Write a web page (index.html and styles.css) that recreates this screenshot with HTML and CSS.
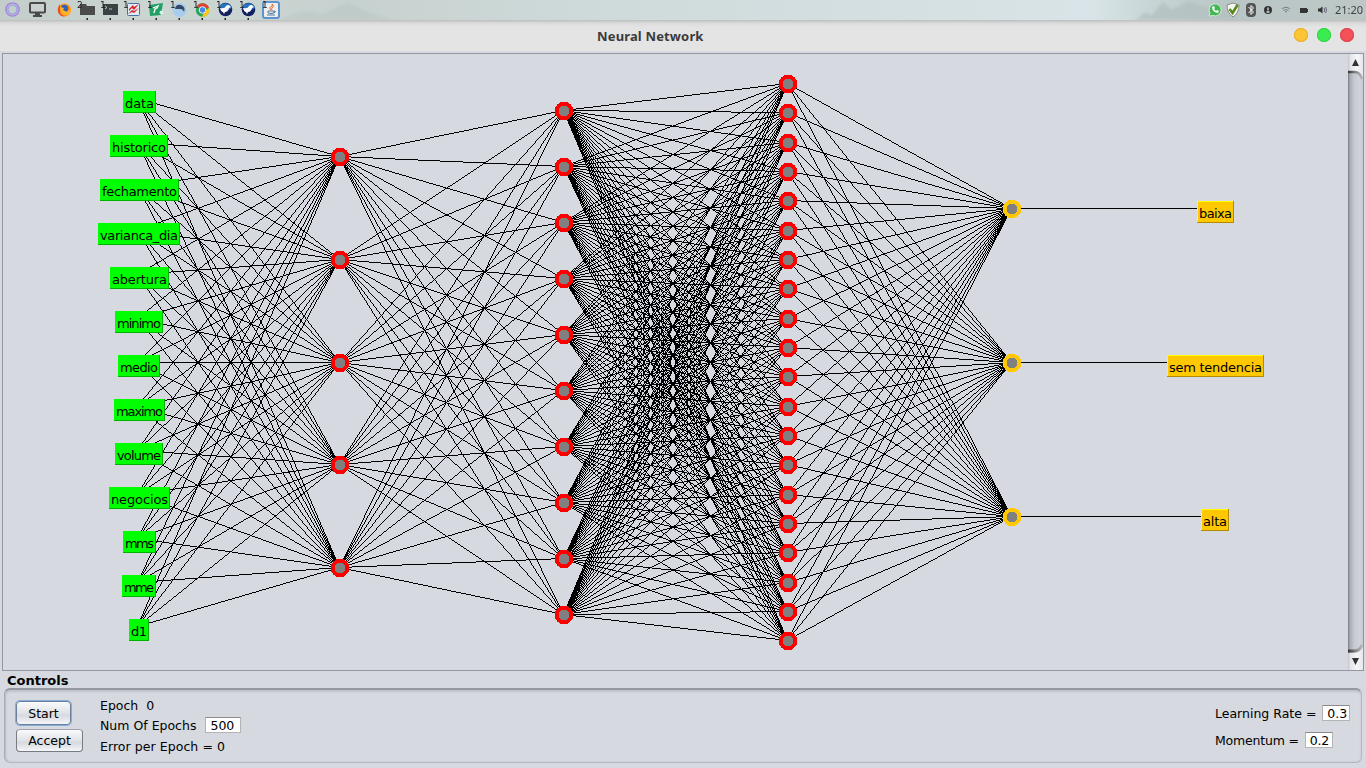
FILE: index.html
```html
<!DOCTYPE html>
<html lang="en">
<head>
<meta charset="utf-8">
<title>Neural Network</title>
<link rel="stylesheet" href="styles.css">
</head>
<body>
<header class="panel">
  <svg class="scenery" width="1366" height="20" viewBox="0 0 1366 20">
    <defs>
      <linearGradient id="sky" x1="0" x2="1"><stop offset="0" stop-color="#c3cdc9"/><stop offset=".12" stop-color="#cbd5d2"/><stop offset=".27" stop-color="#c7d2d0"/><stop offset=".45" stop-color="#cfdadb"/><stop offset=".8" stop-color="#d8e4e7"/><stop offset=".84" stop-color="#c9d6d7"/><stop offset=".9" stop-color="#b9c6c6"/><stop offset="1" stop-color="#bdc8c6"/></linearGradient>
      <filter id="soft"><feGaussianBlur stdDeviation="1.5"/></filter>
    </defs>
    <rect width="1366" height="20" fill="url(#sky)"/>
    <g filter="url(#soft)" fill="#b3c1bf"><path d="M280 20l25-9 17 3 27-12 18 10 24 8z" opacity=".4"/><path d="M1136 20l10-8 5 4 12-14 9 8 16-9 20 7 9-5 20 16z" opacity=".8"/></g>
  </svg>
  <div class="apps">
    <svg width="285" height="20" viewBox="0 0 285 20">
      <g fill="none" stroke-width="1.400"><circle cx="12.500" cy="9.500" r="6.600" stroke="#a880e0"/><circle cx="12.500" cy="9.500" r="4.600" stroke="#8fa0ea"/></g>
      <rect x="30" y="3" width="15" height="9.500" rx="1" fill="#cbd0d0" stroke="#4a4a4a" stroke-width="2"/><path d="M35 13h5v2h2v2h-9v-2h2z" fill="#4a4a4a"/>
      <circle cx="64.500" cy="10" r="6.500" fill="#ff9412"/><path d="M60 4q-3 4-2 8 2 5 7 4.500-5-2-5-5z" fill="#ed4b24"/><circle cx="64.500" cy="8.500" r="3.700" fill="#3761b5"/><path d="M60 7l4 1-1 2 4 2 4-3q0 7-7 6-4-2-4-8z" fill="#ffb32c"/>
      <path d="M80 4h6l1 2h8v9H80z" fill="#4b4b4b"/>
      <rect x="103" y="4" width="15" height="11" fill="#3b4244"/><path d="M105 6l2 1.500-2 1.500M109 9h3" stroke="#ddd" fill="none" stroke-width=".8"/>
      <rect x="127.500" y="3.500" width="12" height="12" rx="1" fill="#dfeaf3" stroke="#4571a5"/><path d="M129 9l4-4 1 2 5-3-5 6-2-2-3 3zM128 14l4-4 2 1 5-3-5 5-2-1z" fill="#d9242a"/>
      <path d="M149 5l14-2-2 12-11 1z" fill="#21a065"/><path d="M153 8l5-2-1 2-2 1-1 4" fill="none" stroke="#fff" stroke-width="1.300"/><circle cx="161.500" cy="12.500" r="2" fill="#d5f2e4"/>
      <circle cx="179.500" cy="10" r="7" fill="#a8cced"/><path d="M175 9q1-5 6-4 5 2 3 7-1-3-4-3z" fill="#344a68"/>
      <circle cx="202.500" cy="10" r="6.700" fill="#29a652"/><path d="M196.500 7A6.700 6.700 0 0 1 209 8h-6z" fill="#df4232"/><path d="M209 8a6.700 6.700 0 0 1-7 8.700l3-6z" fill="#fbc713"/><circle cx="202.500" cy="10" r="3.300" fill="#4587ed" stroke="#eee"/>
      <g id="bird"><circle cx="225.500" cy="9.500" r="6.800" fill="#14205f"/><path d="M219 8a6.800 6.800 0 0 1 13 0l-6 3z" fill="#2474c0"/><path d="M220 8q5 1 6-2 2-2 4 0l1 1-2 1q-1 4-4 4l-1 2-1-2q-2 0-3-4z" fill="#fff"/></g>
      <use href="#bird" x="23"/>
      <rect x="262" y="1" width="18" height="18" rx="3" fill="#5f93cc"/><rect x="264" y="3" width="14" height="14" rx="1" fill="#eee"/><path d="M271 10q-3-2 1-4 1-1 0-2 3 2 0 4-1 1 0 2" fill="none" stroke="#ea6b2c"/><path d="M268 11h6v2q-3 1-6 0zM274 11q3 0 0 2M267 15h8" fill="none" stroke="#527a9d"/>
      <path fill="#242424" d="M86.500 18h1.500v2h-1.500zM109.500 18h1.500v2h-1.500zM132.500 18h1.500v2h-1.500zM155.500 18h1.500v2h-1.500zM178.500 18h1.500v2h-1.500zM201.500 18h1.500v2h-1.500zM224.500 18h1.500v2h-1.500zM247.500 18h1.500v2h-1.500z"/>
      <g class="count"><text x="77" y="7.500">2</text><text x="100" y="7.500">1</text><text x="123" y="7.500">1</text><text x="147" y="7.500">1</text><text x="170" y="7.500">1</text><text x="193" y="7.500">1</text><text x="216" y="7.500">1</text><text x="239" y="7.500">1</text><text x="262" y="7.500">1</text></g>
    </svg>
  </div>
  <div class="tray">
    <svg width="122" height="20" viewBox="1206 0 122 20">
      <path d="M1209 16l1-3a6 6 0 1 1 3 2.500z" fill="#42b653" stroke="#e4f3e5" stroke-width=".8"/><path d="M1212 7q0 5 6 6l1-2-2-1-1 1-2-2 1-1-1-2z" fill="#fff"/>
      <path d="M1233 3l6 2q0 8-6 12-6-4-6-12z" fill="#f4f4f0" stroke="#8b8b83"/><path d="M1229.500 9l3 4 5-8" fill="none" stroke="#55891a" stroke-width="2.500"/>
      <rect x="1246" y="3" width="10" height="14" rx="4" fill="#555"/><path d="M1248.500 7l5 5-2.500 2.500v-9l2.500 2.500-5 5" fill="none" stroke="#fff"/>
      <circle cx="1268" cy="10" r="4" fill="#333"/><path d="M1268 7.500v3M1266.500 12h3" stroke="#ddd" stroke-width="1.300"/>
      <path d="M1282 9q4-3.500 8 0M1283.500 10.500q2.500-2 5 0M1285 12q1-1 2 0" fill="none" stroke="#738080"/>
      <path d="M1300 8h7v1h1v3h-1v1h-7z" fill="#333"/>
      <path d="M1318 8.500h2l2.500-2v7l-2.500-2h-2z" fill="#333"/><path d="M1324 8q1.500 2 0 4M1325.500 7q2 3 0 6" fill="none" stroke="#667"/>
    </svg>
    <span class="clock">21:20</span>
  </div>
</header>
<div class="titlebar">
  <h1>Neural Network</h1>
  <div class="window-buttons"><i class="minimize"></i><i class="maximize"></i><i class="close"></i></div>
</div>
<main>
  <section class="viewport">
    <svg id="network" width="1345" height="616" viewBox="3 54 1345 616"></svg>
    <svg class="scrollbar" width="15" height="616" viewBox="0 0 15 616">
      <defs>
        <linearGradient id="track" x1="0" x2="1"><stop offset="0" stop-color="#777a82"/><stop offset=".13" stop-color="#a8abb2"/><stop offset=".4" stop-color="#c6c9d0"/><stop offset=".8" stop-color="#d1d4db"/><stop offset="1" stop-color="#c5c8ce"/></linearGradient>
        <linearGradient id="cap" x1="0" x2="1"><stop offset="0" stop-color="#c0c3c9"/><stop offset=".15" stop-color="#e2e4e8"/><stop offset=".6" stop-color="#f6f7fa"/><stop offset="1" stop-color="#e4e7eb"/></linearGradient>
        <linearGradient id="lip" x1="0" x2="1"><stop offset="0" stop-color="#333"/><stop offset="1" stop-color="#999" stop-opacity=".5"/></linearGradient>
      </defs>
      <rect width="15" height="616" fill="url(#track)"/>
      <path d="M0 0h15v25q-2-8-8-8H0z" fill="url(#cap)"/><path d="M0 18h7q5 0 7 7" fill="none" stroke="url(#lip)" stroke-width="2.500"/>
      <path d="M4 12l3.500-7 3.500 7z" fill="#333"/>
      <path d="M0 616h15v-25q-2 8-8 8H0z" fill="url(#cap)"/><path d="M0 597h6q6 0 8-6" fill="none" stroke="url(#lip)" stroke-width="3"/>
      <path d="M4 604l3.500 7 3.500-7z" fill="#333"/>
    </svg>
  </section>
  <section class="controls">
    <h2>Controls</h2>
    <div class="box">
      <div class="buttons"><button class="start">Start</button><button>Accept</button></div>
      <div class="status"><p>Epoch&nbsp; 0</p><p>Num Of Epochs <span class="field epochs">500</span></p><p class="error">Error per Epoch = 0</p></div>
      <div class="rates"><p>Learning Rate = <span class="field">0.3</span></p><p class="momentum">Momentum = <span class="field">0.2</span></p></div>
    </div>
  </section>
</main>
<script src="network.js"></script>
</body>
</html>
```
FILE: styles.css
```css
* { box-sizing: border-box; }
body { margin: 0; width: 1366px; height: 768px; overflow: hidden; background: #d6d9e0; font: 13px "DejaVu Sans", sans-serif; color: #000; display: flex; flex-direction: column; }
svg { display: block; }
.panel { position: relative; height: 20px; display: flex; justify-content: space-between; flex: none; }
.scenery { position: absolute; left: 0; top: 0; }
.apps, .tray { position: relative; display: flex; }
.count { font: 9px "DejaVu Sans", sans-serif; fill: #222; }
.clock { font: 11px/20px "Noto Sans", sans-serif; color: #3c4343; width: 38px; padding-left: 7px; white-space: nowrap; }
.titlebar { flex: none; height: 31px; background: linear-gradient(#bdbdbd, #dadada 3px, #e4e4e4 7px); display: grid; grid-template-columns: 597px 1fr auto; }
.titlebar h1 { grid-column: 2; margin: 0; font: bold 13px/33px "Noto Sans", sans-serif; letter-spacing: .15px; color: #3b3b3b; white-space: nowrap; }
.window-buttons { display: flex; gap: 9px; padding: 8px 12px 0 0; }
.window-buttons i { width: 14px; height: 14px; border-radius: 50%; }
.minimize { background: #fdc436; box-shadow: inset 0 0 0 1px #e8ae2c; }
.maximize { background: #3aec50; box-shadow: inset 0 0 0 1px #2fd545; }
.close { background: #f45058; box-shadow: inset 0 0 0 1px #dd444c; }
main { flex: 1; padding: 2px 2px 0; }
.viewport { height: 618px; border: 1px solid #9297a1; display: flex; width: 1362px; }
.links, .shapes { shape-rendering: crispEdges; }
.labels text { font: 13px "DejaVu Sans", sans-serif; }
.controls { padding: 0 2px; }
.controls h2 { margin: 0; padding-left: 3px; height: 17px; font: bold 13px/19px "DejaVu Sans", sans-serif; }
.box { height: 75px; border: 1px solid #b4b7bd; border-top: 2px solid #94979d; border-left-color: #a7aab0; border-radius: 6px; box-shadow: inset 0 2px 2px #c0c3ca, inset 1px 0 2px #b9bcc3; display: flex; padding: 11px 10px 0 11px; }
.buttons { display: flex; flex-direction: column; gap: 4px; width: 84px; align-items: flex-start; }
button { font: 12.5px "DejaVu Sans", sans-serif; height: 23px; width: 67px; padding: 0; border: 1px solid #777b82; border-top-color: #a0a3a9; border-radius: 4px; background: linear-gradient(#fafafb, #e0e2e6 50%, #d6d9df 60%, #f4f6f9); }
button.start { width: 55px; height: 24px; border-color: #69819d; box-shadow: 0 0 0 1px #85add8; }
.status { flex: 1; margin-top: -4px; }
p { margin: 0; font-size: 12.5px; white-space: nowrap; }
.status p { height: 20px; line-height: 18px; display: flex; }
.status .error { line-height: 20px; letter-spacing: .06px; }
.field { display: block; width: 28px; height: 16px; border: 1px solid #b4b4b4; border-top-color: #8b8b8b; background: #fff; line-height: 15px; padding-left: 4px; }
.status .epochs { width: 36px; margin-left: 9px; letter-spacing: 0; }
.rates { width: 136px; padding-top: 4px; }
.rates p { display: flex; gap: 6px; line-height: 17px; height: 27px; }
.rates .momentum { letter-spacing: -.2px; }
```
FILE: network.js
```js
const top0 = 54, areaHeight = 616;
const yOf = (count, i) => top0 + Math.floor(areaHeight * (i + 1) / (count + 1));
const inputs = [["data",123,156],["historico",110,168],["fechamento",100,179],["varianca_dia",98,180],["abertura",110,169],["minimo",115,163],["medio",118,160],["maximo",114,165],["volume",115,163],["negocios",109,170],["mms",123,156],["mme",122,156],["d1",129,149]];
const outputs = [["baixa",1197,1234],["sem tendencia",1167,1264],["alta",1201,1229]];
const layers = [[137,13],[339,5],[563,10],[787,20],[1011,3]];
let links = "", shapes = "", labels = "";

// One-pixel stepped line, drawn as runs along its longer axis.
function link(x1, y1, x2, y2) {
  const dx = x2 - x1, dy = y2 - y1, steep = Math.abs(dy) > dx;
  const n = Math.max(dx, Math.abs(dy));
  const minor = i => steep ? Math.round(x1 + dx * i / n) : Math.round(y1 + dy * i / n);
  const major = i => steep ? y1 + Math.sign(dy) * i : x1 + i;
  let start = 0;
  for (let i = 1; i <= n + 1; i++) {
    if (i <= n && minor(i) === minor(start)) continue;
    const a = Math.min(major(start), major(i - 1)), length = i - start, m = minor(start);
    links += steep ? `M${m} ${a}h1v${length}h-1z` : `M${a} ${m}h${length}v1h-${length}z`;
    start = i;
  }
}
for (let l = 0; l < 4; l++) {
  const [xa, na] = layers[l], [xb, nb] = layers[l + 1];
  for (let a = 0; a < na; a++) for (let b = 0; b < nb; b++) link(xa, yOf(na, a), xb, yOf(nb, b));
}
outputs.forEach((o, i) => link(1011, yOf(3, i), 1211, yOf(3, i)));

function label([text, x1, x2], y, fill, light, dark) {
  const w = x2 - x1;
  shapes += `<rect x="${x1}" y="${y}" width="${w}" height="22" fill="${dark}"/><rect x="${x1}" y="${y}" width="${w-1}" height="21" fill="${light}"/><rect x="${x1+1}" y="${y+1}" width="${w-2}" height="20" fill="${fill}"/>`;
  labels += `<text x="${x1+2}" y="${y+17}" textLength="${w-4}">${text}</text>`;
}
inputs.forEach((o, i) => label(o, yOf(13, i) - 7, "#0f0", "#0f0", "#00b200"));
outputs.forEach((o, i) => label(o, yOf(3, i) - 7, "#ffc800", "#ffff00", "#b28c00"));
for (let l = 1; l < 5; l++) {
  const [x, n] = layers[l];
  for (let i = 0; i < n; i++) {
    const cy = yOf(n, i) + 1;
    shapes += `<circle cx="${x+1}" cy="${cy}" r="9.2" fill="${l === 4 ? "#ffc800" : "#f00"}"/><circle cx="${x+1}" cy="${cy}" r="5.3" fill="#808080"/>`;
  }
}
document.getElementById("network").innerHTML = `<path class="links" d="${links}"/><g class="shapes">${shapes}</g><g class="labels">${labels}</g>`;
```
